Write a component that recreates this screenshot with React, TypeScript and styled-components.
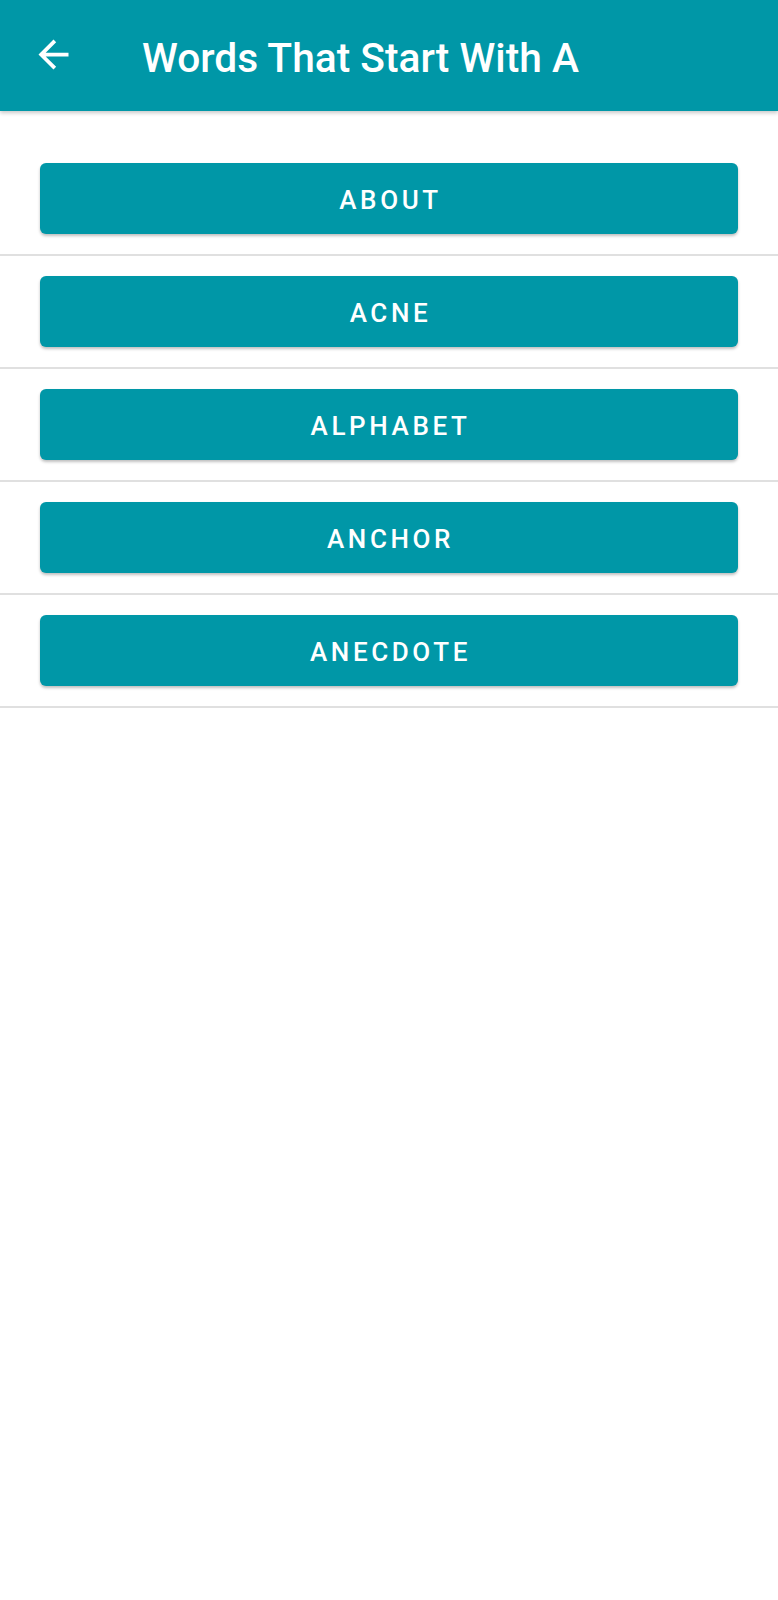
import React from "react";
import styled, { createGlobalStyle } from "styled-components";

const GlobalStyle = createGlobalStyle`
  html, body {
    margin: 0;
    padding: 0;
    background: #ffffff;
    font-family: Roboto, "Noto Sans", "Liberation Sans", sans-serif;
  }
  * { box-sizing: border-box; }
`;

const Page = styled.div`
  width: 100%;
  min-height: 1600px;
  background: #ffffff;
`;

const AppBar = styled.header`
  height: 111px;
  background: #0097a7;
  display: flex;
  align-items: center;
  padding-left: 31px;
  box-shadow: 0 2px 4px rgba(0, 0, 0, 0.22);
  position: relative;
  z-index: 1;
`;

const BackButton = styled.button`
  width: 45px;
  height: 45px;
  padding: 0;
  border: none;
  background: transparent;
  display: flex;
  align-items: center;
  justify-content: center;
  cursor: pointer;
  margin-top: -2px;
`;

const Title = styled.h1`
  margin: 6px 0 0 66px;
  color: #ffffff;
  font-size: 40.7px;
  font-weight: 500;
  letter-spacing: 0;
  line-height: 1;
`;

const List = styled.ul`
  list-style: none;
  margin: 0;
  padding: 32px 0 0;
`;

const Row = styled.li`
  padding: 20px 40px;
  border-bottom: 2px solid #e0e0e0;
`;

const WordButton = styled.button`
  width: 100%;
  height: 71px;
  border: none;
  border-radius: 6px;
  background: #0097a7;
  color: #ffffff;
  font-family: Roboto, "Noto Sans", "Liberation Sans", sans-serif;
  font-size: 26px;
  font-weight: 500;
  letter-spacing: 3.6px;
  padding: 2px 0 0 3px;
  text-transform: uppercase;
  box-shadow: 0 2px 3px rgba(0, 0, 0, 0.25);
  cursor: pointer;
`;

const words = ["About", "Acne", "Alphabet", "Anchor", "Anecdote"];

export default function App() {
  return (
    <Page>
      <GlobalStyle />
      <AppBar>
        <BackButton aria-label="Back">
          <svg width="45" height="45" viewBox="0 0 24 24" fill="#ffffff">
            <path d="M20 11H7.83l5.59-5.59L12 4l-8 8 8 8 1.41-1.41L7.83 13H20v-2z" />
          </svg>
        </BackButton>
        <Title>Words That Start With A</Title>
      </AppBar>
      <List>
        {words.map((w) => (
          <Row key={w}>
            <WordButton>{w}</WordButton>
          </Row>
        ))}
      </List>
    </Page>
  );
}
